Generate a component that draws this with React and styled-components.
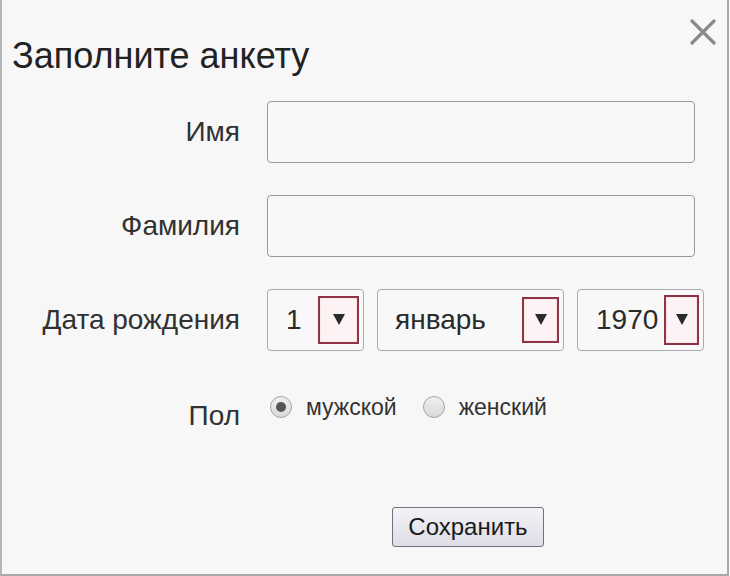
import React from "react";
import styled, { createGlobalStyle } from "styled-components";

const GlobalStyle = createGlobalStyle`
  html, body {
    margin: 0;
    padding: 0;
    background: #f7f7f7;
    font-family: "Liberation Sans", Arial, sans-serif;
    color: #222;
  }
`;

const Dialog = styled.div`
  box-sizing: border-box;
  width: 729px;
  height: 576px;
  background: #f7f7f7;
  border-left: 2px solid #b5b5b5;
  border-right: 2px solid #a8a8a8;
  border-bottom: 2px solid #a8a8a8;
  display: flex;
  flex-direction: column;
`;

const Header = styled.div`
  display: flex;
  justify-content: space-between;
  align-items: flex-start;
  padding: 19px 10px 0 10px;
  height: 82px;
  box-sizing: border-box;
`;

const Title = styled.h1`
  margin: 17px 0 0 0;
  font-weight: normal;
  font-size: 36px;
  line-height: 40px;
  color: #222;
`;

const Close = styled.button`
  border: none;
  background: none;
  padding: 0;
  width: 28px;
  height: 28px;
  cursor: pointer;
`;

const Form = styled.div`
  display: grid;
  grid-template-columns: 238px 428px;
  column-gap: 27px;
  align-items: center;
  padding-top: 19px;
`;

const Label = styled.label`
  text-align: right;
  font-size: 28px;
  color: #313131;
  margin-top: ${(p) => p.$top || 0}px;
`;

const Row = styled.div`
  display: contents;
`;

const Field = styled.div`
  height: 62px;
  margin-bottom: 32px;
  display: flex;
  gap: 13px;
`;

const TextInput = styled.input`
  box-sizing: border-box;
  width: 100%;
  height: 62px;
  border: 1px solid #9a9a9a;
  border-radius: 4px;
  background: #f8f8f8;
  font-size: 24px;
  font-family: inherit;
  padding: 0 12px;
  outline: none;
`;

const Select = styled.div`
  box-sizing: border-box;
  flex-shrink: 0;
  width: ${(p) => p.$w}px;
  height: 62px;
  border: 1px solid #aaa;
  border-radius: 4px;
  background: #f8f8f8;
  display: flex;
  align-items: center;
  justify-content: space-between;
  padding: 0 4px 0 ${(p) => p.$pl}px;
  font-size: 28px;
  color: #2a2a2a;
`;

const Arrow = styled.span`
  box-sizing: border-box;
  width: ${(p) => p.$w || 40}px;
  height: ${(p) => p.$h || 48}px;
  border: 2px solid #8f3445;
  background: #fdf3f5;
  box-shadow: inset 0 0 2px #f4c9d2;
  display: flex;
  align-items: center;
  justify-content: center;
  &::after {
    content: "";
    border-left: 6px solid transparent;
    border-right: 6px solid transparent;
    border-top: 11px solid #2b2b2b;
    margin-top: -2px;
  }
`;

const RadioGroup = styled.div`
  display: flex;
  align-items: center;
  height: 30px;
  margin-top: 14px;
  margin-bottom: 80px;
`;

const RadioItem = styled.label`
  display: flex;
  align-items: center;
  font-size: 23px;
  color: #333;
  margin-right: 23px;
  margin-top: -10px;
`;

const Circle = styled.span`
  box-sizing: border-box;
  width: 22px;
  height: 22px;
  border-radius: 50%;
  border: 1px solid #a5a5a5;
  background: linear-gradient(#f0f0f0, #d8d8d8);
  margin: 0 14px 0 3px;
  display: flex;
  align-items: center;
  justify-content: center;
  &::after {
    content: "";
    display: ${(p) => (p.$checked ? "block" : "none")};
    width: 10px;
    height: 10px;
    border-radius: 50%;
    background: #555;
  }
`;

const ButtonCell = styled.div`
  grid-column: 2;
  padding-left: 125px;
`;

const SaveButton = styled.button`
  box-sizing: border-box;
  width: 152px;
  height: 40px;
  border: 1px solid #707080;
  border-radius: 3px;
  background: linear-gradient(#f3f3f6, #dcdde6);
  font-family: inherit;
  font-size: 24px;
  color: #1a1a1a;
  padding: 0;
`;

export default function App() {
  return (
    <>
      <GlobalStyle />
      <Dialog>
        <Header>
          <Title>Заполните анкету</Title>
          <Close aria-label="close">
            <svg width="26" height="26" viewBox="0 0 26 26">
              <path d="M2 2 L24 24 M24 2 L2 24" stroke="#8a8a8a" strokeWidth="3.2" strokeLinecap="round" />
            </svg>
          </Close>
        </Header>
        <Form>
          <Row>
            <Label $top={-32}>Имя</Label>
            <Field>
              <TextInput />
            </Field>
          </Row>
          <Row>
            <Label $top={-32}>Фамилия</Label>
            <Field>
              <TextInput />
            </Field>
          </Row>
          <Row>
            <Label $top={-32}>Дата рождения</Label>
            <Field>
              <Select $w={97} $pl={18}>
                1 <Arrow $w={41} />
              </Select>
              <Select $w={187} $pl={17}>
                январь <Arrow $w={37} $h={46} />
              </Select>
              <Select $w={127} $pl={18}>
                1970 <Arrow $w={35} $h={50} />
              </Select>
            </Field>
          </Row>
          <Row>
            <Label $top={-58}>Пол</Label>
            <RadioGroup>
              <RadioItem>
                <Circle $checked />
                мужской
              </RadioItem>
              <RadioItem>
                <Circle />
                женский
              </RadioItem>
            </RadioGroup>
          </Row>
          <ButtonCell>
            <SaveButton>Сохранить</SaveButton>
          </ButtonCell>
        </Form>
      </Dialog>
    </>
  );
}
